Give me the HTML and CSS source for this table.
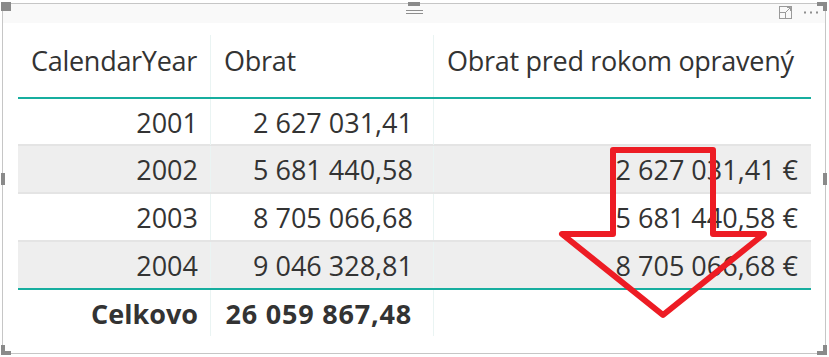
FILE: index.html
```html
<!DOCTYPE html>
<html lang="sk">
<head>
<meta charset="utf-8">
<title>Tabuľka</title>
<link rel="stylesheet" href="styles.css">
</head>
<body>
<div class="visual">
  <div class="topbar">
    <div class="grip"><span></span><span></span></div>
    <div class="tools">
      <svg class="focus" width="13" height="13" viewBox="0 0 13 13">
        <rect x="0.5" y="0.5" width="12" height="12" fill="none" stroke="#9a9a9a"/>
        <rect x="0.5" y="6.5" width="6" height="6" fill="none" stroke="#9a9a9a"/>
        <path d="M6.5 6.5 L11.5 1.5 M8 1.5 H11.5 V5" fill="none" stroke="#9a9a9a"/>
      </svg>
      <svg class="more" width="14" height="3" viewBox="0 0 14 3">
        <rect x="0" y="0.5" width="2" height="2" fill="#8e8e8e"/>
        <rect x="6" y="0.5" width="2" height="2" fill="#8e8e8e"/>
        <rect x="12" y="0.5" width="2" height="2" fill="#8e8e8e"/>
      </svg>
    </div>
  </div>
  <div class="tablewrap">
    <div class="tbl">
      <div class="row head">
        <div class="cell">CalendarYear</div>
        <div class="cell">Obrat</div>
        <div class="cell">Obrat pred rokom opravený</div>
      </div>
      <div class="row first">
        <div class="cell">2001</div>
        <div class="cell">2 627 031,41</div>
        <div class="cell"></div>
      </div>
      <div class="row alt">
        <div class="cell">2002</div>
        <div class="cell">5 681 440,58</div>
        <div class="cell">2 627 031,41 €</div>
      </div>
      <div class="row">
        <div class="cell">2003</div>
        <div class="cell">8 705 066,68</div>
        <div class="cell">5 681 440,58 €</div>
      </div>
      <div class="row alt">
        <div class="cell">2004</div>
        <div class="cell">9 046 328,81</div>
        <div class="cell">8 705 066,68 €</div>
      </div>
      <div class="row total">
        <div class="cell">Celkovo</div>
        <div class="cell">26 059 867,48</div>
        <div class="cell"></div>
      </div>
    </div>
  </div>
</div>
<div class="h h-tl"></div>
<div class="h h-tm"></div>
<div class="h h-tr1"></div><div class="h h-tr2"></div>
<div class="h h-ml"></div>
<div class="h h-mr"></div>
<div class="h h-bl1"></div><div class="h h-bl2"></div>
<div class="h h-br1"></div><div class="h h-br2"></div>
<svg class="arrow" width="829" height="357" viewBox="0 0 829 357">
  <path d="M613 150 H713 V234 H764 L663 315 L562 234 H613 Z" fill="none" stroke="#ed1c24" stroke-width="6" stroke-linejoin="round"/>
</svg>
</body>
</html>
```

FILE: styles.css
```css
html, body {
  margin: 0;
  padding: 0;
  background: #ffffff;
}
body {
  position: relative;
  width: 829px;
  height: 357px;
  overflow: hidden;
  font-family: "Open Sans", "Noto Sans", sans-serif;
  color: #333333;
}
.visual {
  margin: 3px 0 0 2px;
  width: 824px;
  height: 351px;
  box-sizing: border-box;
  border: 1px solid #c6c6c6;
  background: #ffffff;
}
.topbar {
  height: 19px;
  background: #f9f9f9;
  display: flex;
  justify-content: center;
  position: relative;
}
.grip {
  display: flex;
  flex-direction: column;
  gap: 2px;
  padding-top: 6px;
}
.grip span {
  display: block;
  width: 17px;
  height: 1px;
  background: #8e8e8e;
}
.tools {
  position: absolute;
  right: 7px;
  top: 2px;
  display: flex;
  align-items: center;
  gap: 12px;
}
.focus { display: block; }
.more { display: block; }
.tablewrap {
  padding: 12px 0 0 15px;
}
.tbl {
  width: 793px;
  font-size: 27px;
}
.row {
  display: grid;
  grid-template-columns: 192px 223px 378px;
  height: 48px;
  box-sizing: border-box;
  border-top: 2px solid #e4e4e4;
}
.row .cell {
  box-sizing: border-box;
  padding-top: 2px;
  line-height: 44px;
  text-align: right;
  white-space: nowrap;
}
.row .cell:nth-child(1) { padding-right: 12px; }
.row .cell:nth-child(2) { padding-right: 20px; border-left: 1px solid #eaf4f3; }
.row .cell:nth-child(3) { padding-right: 13px; border-left: 1px solid #eaf4f3; }
.row.alt { background: #eeeeee; }
.row.head {
  height: 64px;
  border-top: none;
  border-bottom: 2px solid #17ae9f;
}
.row.head .cell {
  text-align: left;
  padding: 0 0 0 13px;
  line-height: 51px;
  height: 62px;
  letter-spacing: -0.28px;
}
.row.first {
  height: 45px;
  border-top: none;
}
.row.total {
  height: 47px;
  border-top: 2px solid #17ae9f;
  font-weight: 700;
}
.row.total .cell:nth-child(2) {
  letter-spacing: 0.8px;
  padding-right: 21px;
}
.h {
  position: absolute;
  background: #8a8a8a;
}
.h-tl { left: 1px; top: 2px; width: 10px; height: 9px; }
.h-tm { left: 408px; top: 2px; width: 12px; height: 4px; }
.h-tr1 { left: 817px; top: 2px; width: 10px; height: 4px; }
.h-tr2 { left: 823px; top: 2px; width: 4px; height: 9px; }
.h-ml { left: 1px; top: 173px; width: 4px; height: 12px; }
.h-mr { left: 823px; top: 173px; width: 4px; height: 12px; }
.h-bl1 { left: 1px; top: 345px; width: 4px; height: 10px; }
.h-bl2 { left: 1px; top: 351px; width: 10px; height: 4px; }
.h-br1 { left: 823px; top: 345px; width: 4px; height: 10px; }
.h-br2 { left: 817px; top: 351px; width: 10px; height: 4px; }
.arrow {
  position: absolute;
  left: 0;
  top: 0;
  pointer-events: none;
}
```
